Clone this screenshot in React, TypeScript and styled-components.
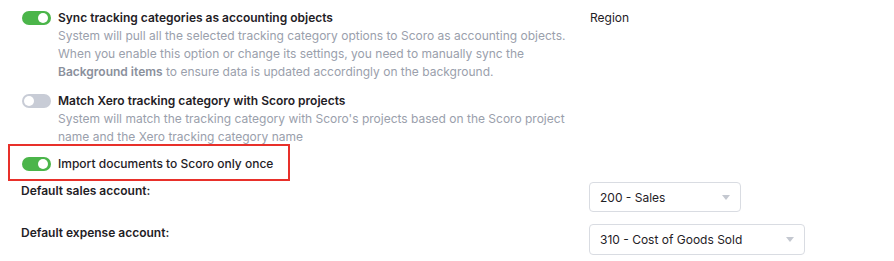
import React from "react";
import styled, { createGlobalStyle } from "styled-components";

const Global = createGlobalStyle`
  html, body { margin: 0; padding: 0; background: #ffffff; }
  body { font-family: Inter, "Noto Sans", Arial, sans-serif; -webkit-font-smoothing: antialiased; }
`;

const Page = styled.div`
  width: 894px;
  height: 261px;
  box-sizing: border-box;
  padding: 9px 0 0 22px;
  display: grid;
  grid-template-columns: 567px 1fr;
  grid-auto-rows: auto;
  overflow: hidden;
`;

const Options = styled.div`
  display: flex;
  flex-direction: column;
`;

const OptionRow = styled.div<{ $gap?: number }>`
  display: flex;
  align-items: flex-start;
  gap: 7px;
  margin-bottom: ${(p) => p.$gap ?? 0}px;
`;

const Switch = styled.span<{ $on: boolean }>`
  flex: none;
  position: relative;
  width: 29px;
  height: 14px;
  margin-top: 2px;
  border-radius: 7px;
  background: ${(p) => (p.$on ? "#4bb54a" : "#c8ccd6")};
  &::after {
    content: "";
    position: absolute;
    top: 2px;
    left: ${(p) => (p.$on ? "16px" : "2px")};
    width: 10px;
    height: 10px;
    border-radius: 50%;
    background: #ffffff;
  }
`;

const OptionText = styled.div`
  display: flex;
  flex-direction: column;
`;

const Title = styled.div<{ $bold?: boolean }>`
  font-size: 12px;
  line-height: 18px;
  font-weight: ${(p) => (p.$bold ? 600 : 500)};
  color: #1f2126;
`;

const Desc = styled.div`
  font-size: 12px;
  line-height: 18px;
  color: #9aa0ac;
  b { font-weight: 600; color: #8a909c; }
`;

const Highlight = styled.div`
  box-sizing: border-box;
  width: 282px;
  height: 37px;
  margin: -2px 0 0 -14px;
  padding: 9px 0 0 12px;
  border: 2px solid #e8302a;
`;

const Side = styled.div`
  font-size: 12px;
  line-height: 18px;
  color: #1f2126;
  margin-left: 1px;
`;

const FieldLabel = styled.div<{ $top: number }>`
  font-size: 12px;
  line-height: 18px;
  font-weight: 600;
  color: #1f2126;
  margin-top: ${(p) => p.$top}px;
  margin-left: -1px;
`;

const SelectCell = styled.div<{ $top: number }>`
  margin-top: ${(p) => p.$top}px;
`;

const Select = styled.div<{ $w: number; $h: number }>`
  box-sizing: border-box;
  width: ${(p) => p.$w}px;
  height: ${(p) => p.$h}px;
  border: 1px solid #d9dce2;
  border-radius: 4px;
  display: flex;
  align-items: center;
  justify-content: space-between;
  padding: 0 10px 0 10px;
  font-size: 12px;
  color: #1f2126;
`;

const Caret = styled.span`
  width: 0;
  height: 0;
  border-left: 4px solid transparent;
  border-right: 4px solid transparent;
  border-top: 5px solid #c4c8d0;
`;

export default function App() {
  return (
    <>
      <Global />
      <Page>
        <Options>
          <OptionRow $gap={11}>
            <Switch $on />
            <OptionText>
              <Title $bold>Sync tracking categories as accounting objects</Title>
              <Desc>
                System will pull all the selected tracking category options to Scoro as accounting objects.
                <br />
                When you enable this option or change its settings, you need to manually sync the
                <br />
                <b>Background items</b> to ensure data is updated accordingly on the background.
              </Desc>
            </OptionText>
          </OptionRow>
          <OptionRow>
            <Switch $on={false} />
            <OptionText>
              <Title $bold>Match Xero tracking category with Scoro projects</Title>
              <Desc>
                System will match the tracking category with Scoro's projects based on the Scoro project
                <br />
                name and the Xero tracking category name
              </Desc>
            </OptionText>
          </OptionRow>
          <Highlight>
            <OptionRow>
              <Switch $on />
              <Title>Import documents to Scoro only once</Title>
            </OptionRow>
          </Highlight>
        </Options>
        <Side>Region</Side>
        <FieldLabel $top={-5}>Default sales account:</FieldLabel>
        <SelectCell $top={-5}>
          <Select $w={152} $h={30}>
            200 - Sales
            <Caret />
          </Select>
        </SelectCell>
        <FieldLabel $top={5}>Default expense account:</FieldLabel>
        <SelectCell $top={5}>
          <Select $w={216} $h={31}>
            310 - Cost of Goods Sold
            <Caret />
          </Select>
        </SelectCell>
      </Page>
    </>
  );
}
